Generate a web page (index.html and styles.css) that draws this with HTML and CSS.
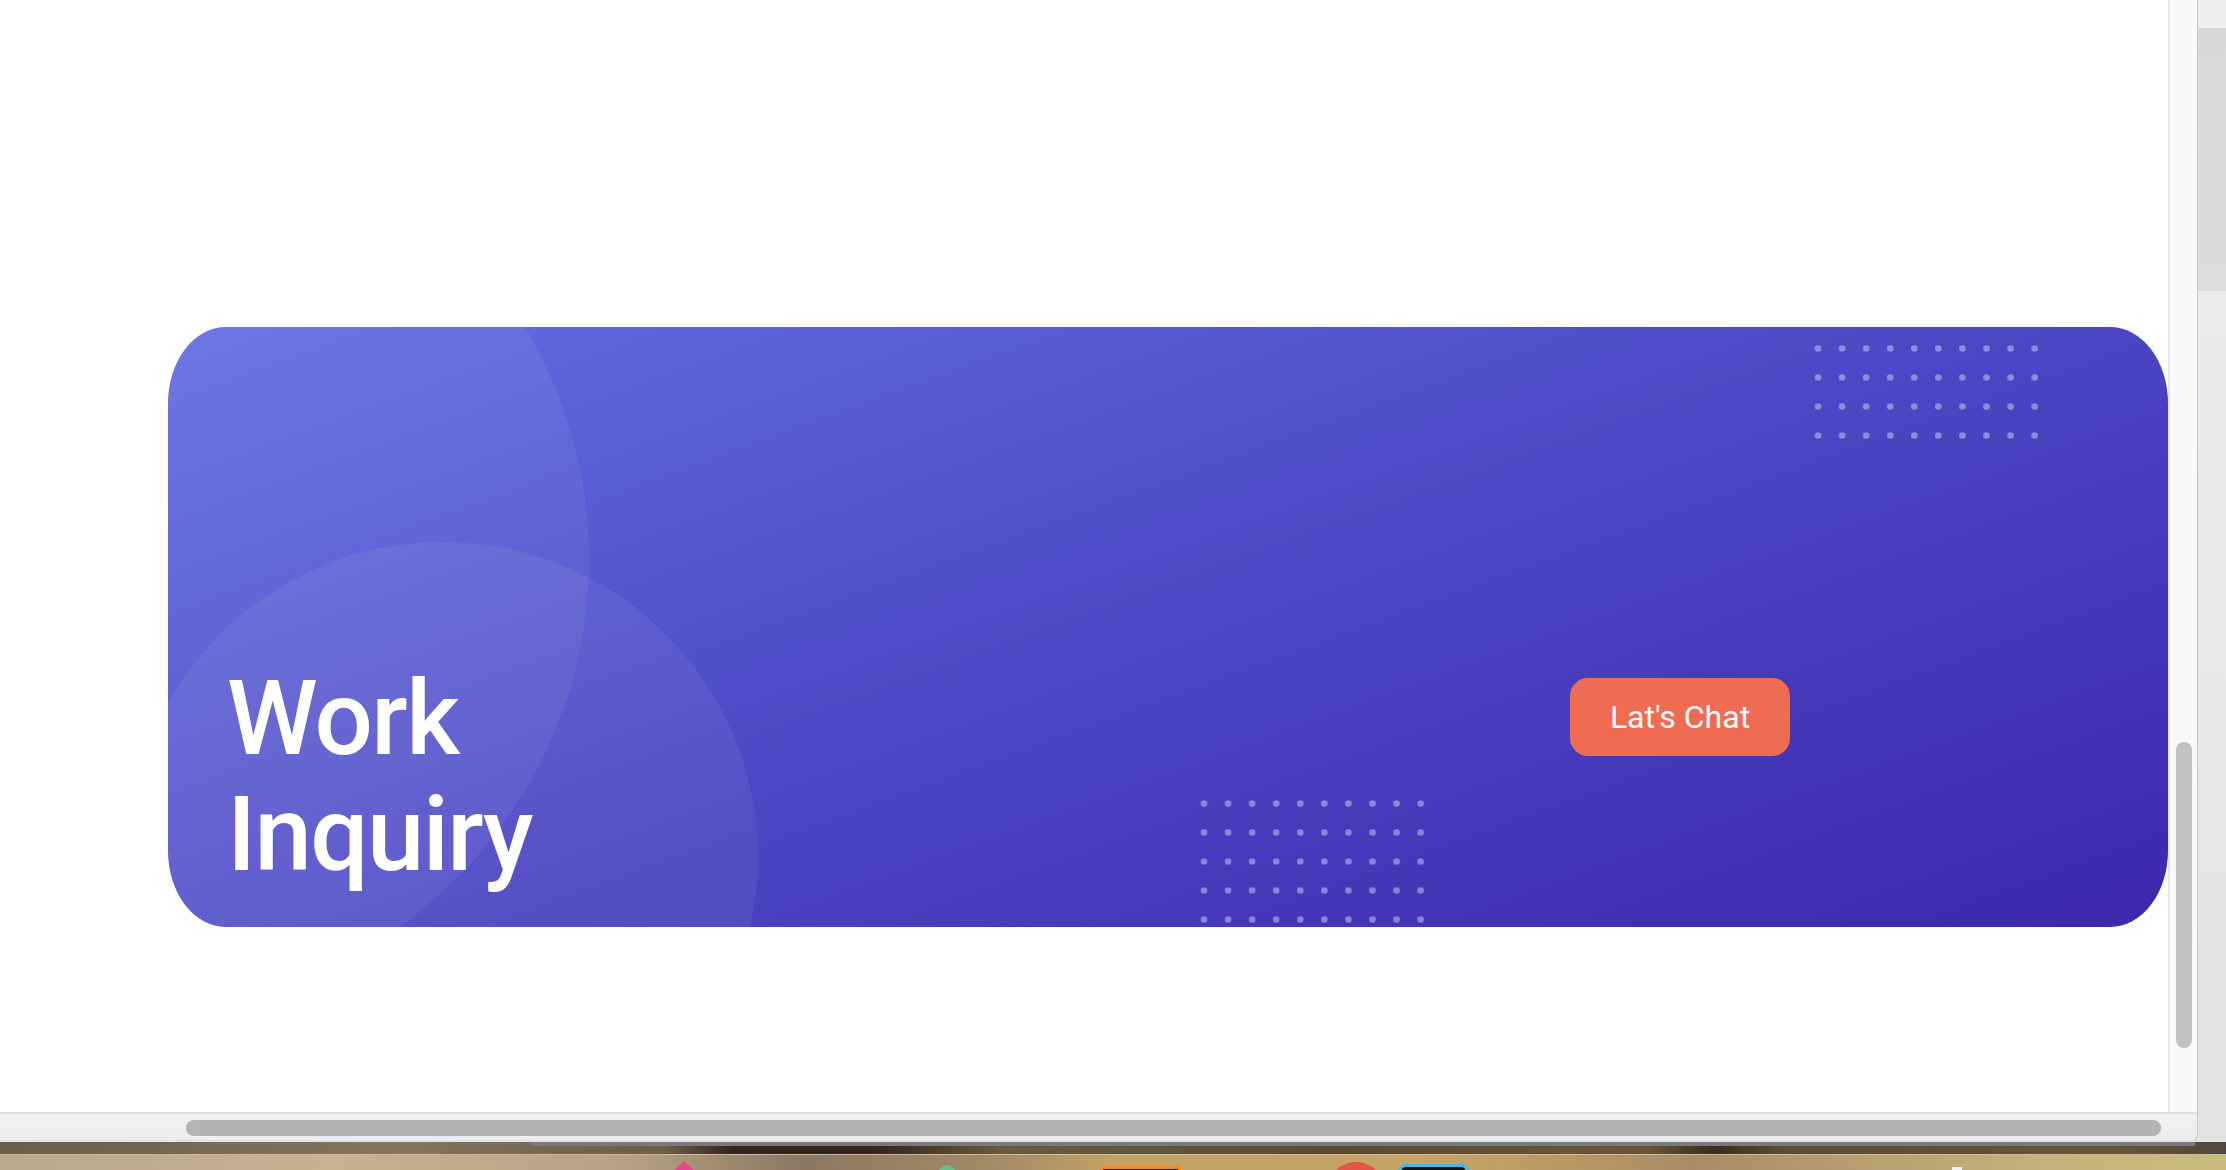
FILE: index.html
```html
<!DOCTYPE html>
<html lang="en">
<head>
<meta charset="utf-8">
<title>Work Inquiry</title>
<link rel="stylesheet" href="styles.css">
</head>
<body>
<div class="screen">
  <div class="top">
    <div class="window">
      <div class="window-body">
        <main class="page">
          <section class="cta">
            <span class="blob blob-a"></span>
            <span class="blob blob-b"></span>
            <svg class="dots dots-top" width="241" height="116" viewBox="0 0 241 116" aria-hidden="true">
              <defs>
                <pattern id="dotgridA" x="0" y="0" width="24.07" height="29" patternUnits="userSpaceOnUse">
                  <circle cx="12" cy="14.5" r="3.3" fill="#ffffff" fill-opacity="0.38"/>
                </pattern>
              </defs>
              <rect width="241" height="116" fill="url(#dotgridA)"/>
            </svg>
            <svg class="dots dots-bottom" width="241" height="145" viewBox="0 0 241 145" aria-hidden="true">
              <defs>
                <pattern id="dotgridB" x="0" y="0" width="24.07" height="29" patternUnits="userSpaceOnUse">
                  <circle cx="12" cy="14.5" r="3.3" fill="#ffffff" fill-opacity="0.38"/>
                </pattern>
              </defs>
              <rect width="241" height="145" fill="url(#dotgridB)"/>
            </svg>
            <h2 class="cta-title">Work Inquiry</h2>
            <a class="cta-btn" href="#">Lat's Chat</a>
          </section>
        </main>
        <div class="vscroll"><div class="vthumb"></div></div>
      </div>
      <div class="hscroll"><div class="hthumb"></div></div>
    </div>
    <div class="desk-side"></div>
  </div>
  <div class="desk-bottom">
    <div class="wall"><span class="win-shadow"></span></div>
    <div class="dock">
      <span class="dock-icon icon-pink"></span>
      <span class="dock-icon icon-green"></span>
      <span class="dock-icon icon-orange"></span>
      <span class="dock-icon icon-red"></span>
      <span class="dock-icon icon-cyan"></span>
      <span class="dock-icon icon-white"></span>
    </div>
  </div>
</div>
</body>
</html>
```

FILE: styles.css
```css
* { box-sizing: border-box; }

html, body {
  margin: 0;
  padding: 0;
}

body {
  width: 2226px;
  height: 1170px;
  overflow: hidden;
  font-family: Roboto, "Liberation Sans", Arial, sans-serif;
  background: #d9d9d9;
}

.screen {
  display: flex;
  flex-direction: column;
  width: 2226px;
  height: 1170px;
}

.top {
  display: flex;
  height: 1142px;
}

/* browser window */
.window {
  width: 2198px;
  display: flex;
  flex-direction: column;
  border-right: 1px solid #c8c8c8;
  border-bottom-right-radius: 10px;
  overflow: hidden;
  background: #f9f9f9;
}

.window-body {
  display: flex;
  height: 1112px;
}

.page {
  width: 2170px;
  height: 1112px;
  background: #ffffff;
  border-right: 2px solid #e8e8e8;
  padding: 327px 0 0 168px;
  overflow: hidden;
}

/* call-to-action card */
.cta {
  position: relative;
  width: 2000px;
  height: 600px;
  border-radius: 58px / 76px;
  overflow: hidden;
  background: linear-gradient(160deg, #646fe4 0%, #4c48c5 50%, #3c28ab 100%);
  display: flex;
  align-items: flex-end;
  justify-content: space-between;
  padding: 0 378px 34px 59px;
}

.blob {
  position: absolute;
  border-radius: 50%;
  background: rgba(255, 255, 255, 0.06);
}

.blob-a {
  left: -483px;
  top: -220px;
  width: 904px;
  height: 904px;
}

.blob-b {
  left: -40px;
  top: 215px;
  width: 630px;
  height: 630px;
}

.dots {
  position: absolute;
  display: block;
}

.dots-top {
  left: 1638px;
  top: 7px;
}

.dots-bottom {
  left: 1024px;
  top: 462px;
}

.cta-title {
  position: relative;
  margin: 0;
  width: 400px;
  font-size: 103px;
  line-height: 116px;
  font-weight: 500;
  color: #ffffff;
  letter-spacing: -1.6px;
}

.cta-btn {
  position: relative;
  display: block;
  width: 220px;
  height: 78px;
  margin-bottom: 137px;
  border-radius: 18px;
  background: #ef6c53;
  color: #ffffff;
  text-decoration: none;
  text-align: center;
  font-size: 32px;
  line-height: 78px;
  font-weight: 400;
}

/* fake scrollbars */
.vscroll {
  flex: 1;
  background: #f9f9f9;
  padding: 742px 0 0 6px;
}

.vthumb {
  width: 16px;
  height: 306px;
  border-radius: 8px;
  background: #c1c1c1;
}

.hscroll {
  height: 30px;
  border-top: 2px solid #e0e0e0;
  border-bottom: 2px solid #e4e4e4;
  background: linear-gradient(#f1f1f1, #ececec);
  padding: 6px 0 0 186px;
}

.hthumb {
  width: 1975px;
  height: 16px;
  border-radius: 8px;
  background: #b3b3b3;
}

/* desktop behind */
.desk-side {
  flex: 1;
  background: linear-gradient(to bottom,
    #efefef 0, #efefef 28px,
    #d8d8d8 28px, #dcdcdc 291px,
    #ebebeb 291px, #e3e3e3 100%);
}

.desk-bottom {
  height: 28px;
  display: flex;
  flex-direction: column;
}

.wall {
  position: relative;
  height: 12px;
  background: linear-gradient(90deg,
    #6b5d4b 0%, #86755a 18%, #6c5c48 30%, #2f251c 33%, #2f251c 39%,
    #6b5a3c 45%, #5c4b31 60%, #6a5636 74%, #3a2c1c 77%, #5e4c33 80%,
    #665534 95%, #504840 100%);
}

.win-shadow {
  position: absolute;
  left: 529px;
  top: 0;
  width: 1666px;
  height: 4px;
  background: #7a7a7a;
  border-bottom-left-radius: 4px;
}

.dock {
  position: relative;
  height: 16px;
  border-top: 1px solid #cbb99a;
  background: linear-gradient(90deg,
    #b9a88d 0%, #c7b190 15%, #b6a283 28%, #8c7762 36%, #a38b66 45%,
    #c1a266 50%, #c4a463 65%, #a98c66 76%, #c4b27c 92%, #c9bb7d 100%);
  overflow: hidden;
}

.dock-icon {
  position: absolute;
  display: block;
}

.icon-pink {
  left: 676px;
  top: 9px;
  width: 16px;
  height: 16px;
  background: #e8458f;
  transform: rotate(45deg);
}

.icon-green {
  left: 938px;
  top: 10px;
  width: 18px;
  height: 18px;
  border-radius: 50%;
  background: #6cbf84;
}

.icon-orange {
  left: 1100px;
  top: 11px;
  width: 81px;
  height: 20px;
  border: 3px solid #f08a2c;
  background: #1a1a1a;
}

.icon-red {
  left: 1334px;
  top: 7px;
  width: 44px;
  height: 30px;
  border-radius: 50%;
  background: #e35444;
}

.icon-cyan {
  left: 1398px;
  top: 9px;
  width: 71px;
  height: 24px;
  border: 3px solid #3fb8ec;
  border-radius: 8px;
  background: #111;
}

.icon-white {
  left: 1952px;
  top: 12px;
  width: 10px;
  height: 10px;
  background: #f0f0f0;
}
```
